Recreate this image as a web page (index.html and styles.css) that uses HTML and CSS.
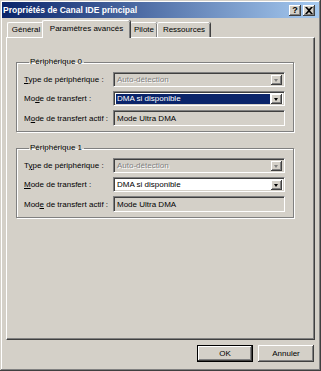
FILE: index.html
```html
<!DOCTYPE html>
<html>
	<head>
		<meta charset="utf-8">
		<link rel="stylesheet" href="styles.css">
		<title>Propriétés de Canal IDE principal</title>
	</head>
	<body>
		<div class="window">
			<div class="titlebar">
				<span class="title">Propriétés de Canal IDE principal</span>
				<span class="caption-btn help">?</span>
				<span class="caption-btn close">
					<svg width="8" height="7" viewBox="0 0 8 7"><path d="M0 0h2l2 2 2-2h2l-3 3.5 3 3.5h-2l-2-2-2 2h-2l3-3.5z" fill="#000"/></svg>
				</span>
			</div>
			<div class="content">
				<div class="tabs">
					<div class="tab t1">Général</div>
					<div class="tab active t2">Paramètres avancés</div>
					<div class="tab t3">Pilote</div>
					<div class="tab t4">Ressources</div>
				</div>
				<div class="panel">
					<fieldset class="group">
						<legend>Périphérique 0</legend>
						<label><u>T</u>ype de périphérique :</label>
						<div class="combo disabled"><span class="value">Auto-détection</span><span class="arrow"></span></div>
						<label>Mo<u>d</u>e de transfert :</label>
						<div class="combo focused"><span class="value">DMA si disponible</span><span class="arrow"></span></div>
						<label>M<u>o</u>de de transfert actif :</label>
						<div class="field">Mode Ultra DMA</div>
					</fieldset>
					<fieldset class="group">
						<legend>Périphérique 1</legend>
						<label>T<u>y</u>pe de périphérique :</label>
						<div class="combo disabled"><span class="value">Auto-détection</span><span class="arrow"></span></div>
						<label><u>M</u>ode de transfert :</label>
						<div class="combo"><span class="value">DMA si disponible</span><span class="arrow"></span></div>
						<label>Mod<u>e</u> de transfert actif :</label>
						<div class="field">Mode Ultra DMA</div>
					</fieldset>
				</div>
				<div class="buttons">
					<div class="button default">OK</div>
					<div class="button">Annuler</div>
				</div>
			</div>
		</div>
	</body>
</html>
```

FILE: styles.css
```css
* {
	margin: 0;
	padding: 0;
	box-sizing: border-box;
}

body {
	font-family: "Liberation Sans", Arial, sans-serif;
	font-size: 8px;
	color: #000;
	background-color: #d4d0c8;
}

.window {
	display: flex;
	flex-direction: column;
	width: 321px;
	height: 371px;
	padding: 2px;
	background-color: #d4d0c8;
	box-shadow: inset -1px -1px #404040, inset 1px 1px #d4d0c8, inset -2px -2px #808080, inset 2px 2px #fff;
}

.titlebar {
	display: flex;
	align-items: center;
	height: 16px;
	padding: 0 4px 0 1px;
	background: linear-gradient(to right, #0a246a, #a6caf0);
}

.title {
	flex: 1;
	color: #fff;
	font-weight: 700;
	font-size: 8.5px;
}

.caption-btn {
	display: flex;
	align-items: center;
	justify-content: center;
	width: 12px;
	height: 11px;
	background-color: #d4d0c8;
	box-shadow: inset -1px -1px #404040, inset 1px 1px #fff, inset -2px -2px #808080;
	font-weight: 700;
	font-size: 9px;
	line-height: 11px;
}

.help {
	margin-right: 2px;
}

.content {
	display: flex;
	flex-direction: column;
	flex: 1;
	padding: 2px 4px 7px;
}

.tabs {
	display: flex;
	align-items: flex-end;
	height: 17px;
	padding-left: 1px;
}

.tab {
	height: 15px;
	line-height: 14px;
	text-align: center;
	border-top: 1px solid #fff;
	border-left: 1px solid #fff;
	border-radius: 2px 2px 0 0;
	box-shadow: inset -1px 0 #808080, 1px 0 #404040;
}

.tab.active {
	position: relative;
	z-index: 1;
	height: 18px;
	line-height: 15px;
	margin: 0 -1px -1px -2px;
	background-color: #d4d0c8;
}

.t1 {
	width: 37px;
}

.t2 {
	width: 88px;
}

.t3 {
	width: 27px;
	margin-left: 1px;
}

.t4 {
	width: 53px;
}

.panel {
	flex: 1;
	padding: 19px 20px 0 9px;
	border: 1px solid;
	border-color: #fff #404040 #404040 #fff;
	box-shadow: inset -1px -1px #808080;
}

.group {
	display: grid;
	grid-template-columns: 89px 1fr;
	row-gap: 4px;
	align-items: center;
	padding: 5px 8px 5px 7px;
	margin-bottom: 11px;
	border: 1px solid #808080;
	box-shadow: inset 1px 1px #fff, 1px 1px #fff;
}

.group legend {
	padding: 0 2px 0 1px;
	margin-left: 5px;
	line-height: 10px;
}

.group label {
	line-height: 15px;
}

.combo,
.field {
	display: flex;
	align-items: center;
	height: 16px;
	padding: 2px;
	background-color: #fff;
	border: 1px solid;
	border-color: #808080 #fff #fff #808080;
	box-shadow: inset 1px 1px #404040, inset -1px -1px #d4d0c8;
}

.combo {
	height: 15px;
}

.field {
	padding-left: 3px;
	background-color: #d4d0c8;
}

.value {
	flex: 1;
	height: 10px;
	line-height: 10px;
	padding-left: 1px;
}

.combo.focused .value {
	background-color: #0a246a;
	color: #fff;
}

.combo.disabled {
	background-color: #d4d0c8;
}

.combo.disabled .value {
	color: #808080;
	text-shadow: 1px 1px #fff;
}

.arrow {
	position: relative;
	width: 11px;
	height: 10px;
	margin-left: 1px;
	background-color: #d4d0c8;
	box-shadow: inset -1px -1px #404040, inset 1px 1px #fff, inset -2px -2px #808080;
}

.arrow::after {
	content: "";
	position: absolute;
	left: 3px;
	top: 4px;
	border-left: 2.5px solid transparent;
	border-right: 2.5px solid transparent;
	border-top: 3px solid #000;
}

.combo.disabled .arrow::after {
	border-top-color: #808080;
}

.buttons {
	display: flex;
	justify-content: flex-end;
	gap: 5px;
	padding: 5px 1px 0 0;
}

.button {
	width: 56px;
	height: 17px;
	line-height: 17px;
	text-align: center;
	box-shadow: inset -1px -1px #404040, inset 1px 1px #fff, inset -2px -2px #808080, inset 2px 2px #d4d0c8;
}

.button.default {
	border: 1px solid #000;
	line-height: 15px;
	box-shadow: inset -1px -1px #404040, inset 1px 1px #fff, inset -2px -2px #808080;
}
```
